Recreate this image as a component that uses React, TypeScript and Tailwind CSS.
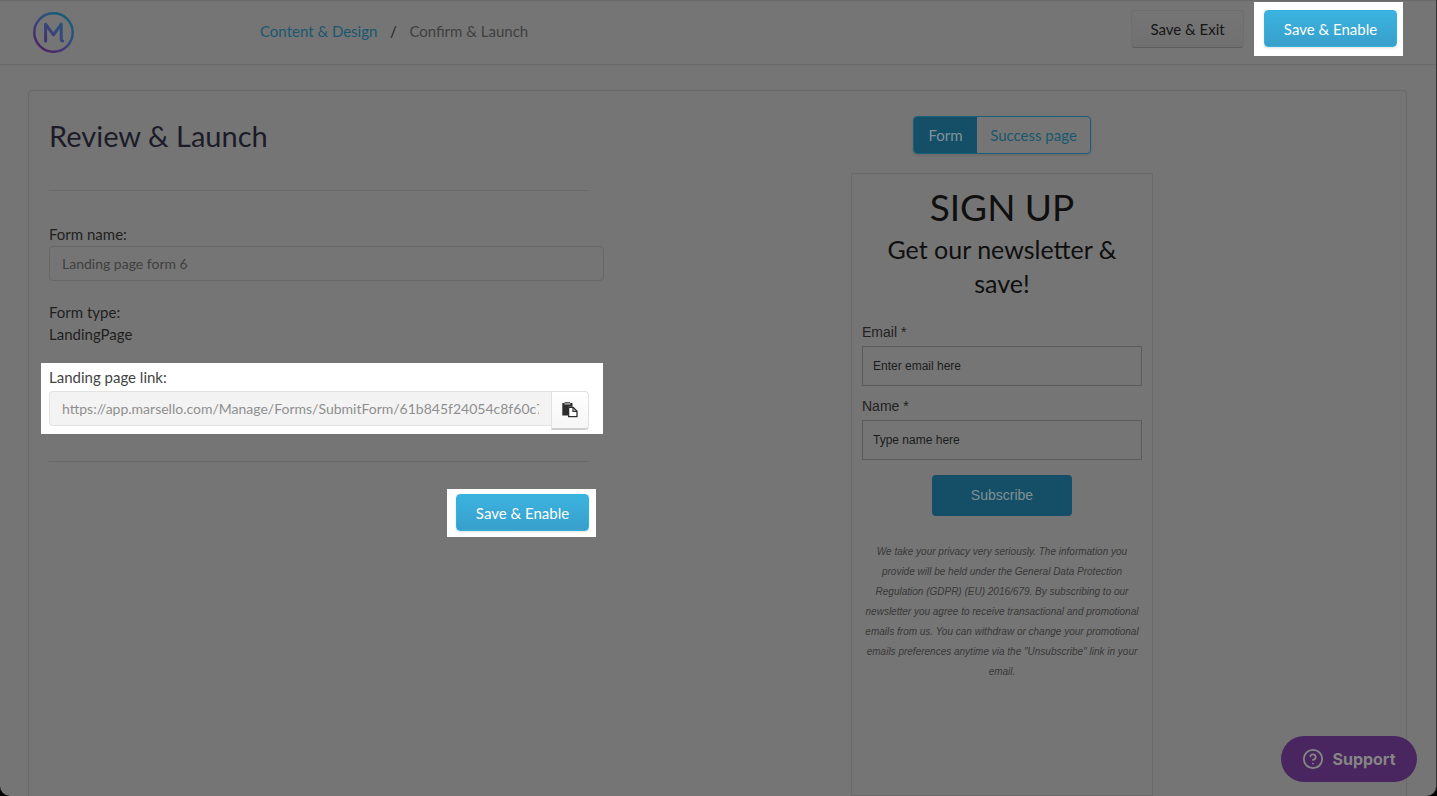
import type { ReactNode } from "react";
import { CircleHelp } from "lucide-react";

type ButtonProps = {
  children: ReactNode;
};

function PrimaryButton({ children }: ButtonProps) {
  return (
    <button
      type="button"
      className="h-[37px] w-[133px] rounded border border-[#35b1de] bg-linear-to-b from-[#3bb3e0] to-[#389fcb] text-[15px] leading-5 text-white shadow-sm"
    >
      {children}
    </button>
  );
}

function Logo() {
  return (
    <svg viewBox="0 0 41 41" className="h-[41px] w-[41px]" fill="none" strokeWidth="2.4" aria-label="Marsello">
      <defs>
        <linearGradient id="logo-gradient" x1="8" y1="36" x2="33" y2="5" gradientUnits="userSpaceOnUse">
          <stop offset="0" stopColor="#4a2467" />
          <stop offset="0.5" stopColor="#39437c" />
          <stop offset="1" stopColor="#155f78" />
        </linearGradient>
      </defs>
      <circle cx="20.5" cy="20.5" r="19.2" stroke="url(#logo-gradient)" />
      <path
        d="M12.6 29V12.2l7.9 10.6 7.7-10.6v14.5q0 2 1.4 2.3"
        stroke="url(#logo-gradient)"
        strokeWidth="3"
        strokeLinecap="round"
        strokeLinejoin="round"
      />
    </svg>
  );
}

function PasteIcon() {
  return (
    <svg viewBox="0 0 16 16" className="h-4 w-4" aria-hidden="true">
      <path d="M0.3 1h2.2V0.3h5.6V1h2.4v3.7H6v8.8H0.3z" fill="#2d2d2d" />
      <path d="M2.4 1.9h6" stroke="#fff" strokeWidth="0.9" />
      <path d="M6.6 5.3h4.4l4 4v5.4H6.6z" fill="#fff" stroke="#2d2d2d" strokeWidth="1.3" strokeLinejoin="round" />
      <path d="M11 5.3v4h4" fill="none" stroke="#2d2d2d" strokeWidth="1.2" />
    </svg>
  );
}

function Header() {
  return (
    <header className="flex h-[65px] shrink-0 items-start border-t border-b border-t-[#696969] border-b-[#6a6a6a]">
      <a href="#home" className="mt-[11px] ml-[33px] w-[227px]">
        <Logo />
      </a>
      <nav className="mt-[19px] flex text-[15px] leading-[22px]">
        <a href="#design" className="text-[#19586f]">
          Content &amp; Design
        </a>
        <span className="mx-3 w-2 text-center text-[#222]">/</span>
        <span className="text-[#3f3f3f]">Confirm &amp; Launch</span>
      </nav>
      <div className="mr-[33px] ml-auto flex items-start gap-2.5">
        <button
          type="button"
          className="mt-[9px] h-[38px] w-[113px] rounded border border-[#6e6e6e] border-b-[#5e5e5e] bg-linear-to-b from-[#757575] to-[#707070] text-[15px] leading-5 text-[#161616]"
        >
          Save &amp; Exit
        </button>
        <div className="mt-px bg-white pt-2 pr-1.5 pb-[9px] pl-2.5">
          <PrimaryButton>Save &amp; Enable</PrimaryButton>
        </div>
      </div>
    </header>
  );
}

function ReviewForm() {
  return (
    <section className="flex w-[575px] shrink-0 flex-col pt-6 pl-5 text-[15px] text-[#1f1f1f]">
      <h1 className="text-[29px] leading-[42px] text-[#1c1c28]">Review &amp; Launch</h1>
      <hr className="mt-[33px] mr-[15px] border-[#6a6a6a]" />
      <label htmlFor="form-name" className="mt-[31px] leading-6">
        Form name:
      </label>
      <input
        id="form-name"
        defaultValue="Landing page form 6"
        className="h-[35px] w-full rounded border border-[#676767] px-3 text-[14px] text-[#404040]"
      />
      <div className="mt-5 leading-[22px]">
        <p>Form type:</p>
        <p>LandingPage</p>
      </div>
      <div className="mt-[18px] mr-px -ml-2 flex flex-col bg-white pt-0.5 pr-3.5 pb-1 pl-2">
        <label htmlFor="page-link" className="leading-6 text-[#444]">
          Landing page link:
        </label>
        <div className="mt-0.5 flex items-start">
          <input
            id="page-link"
            readOnly
            defaultValue="https://app.marsello.com/Manage/Forms/SubmitForm/61b845f24054c8f60c7e1d"
            className="h-[35px] min-w-0 flex-1 rounded-l border border-r-0 border-[#e2e2e2] bg-[#f3f3f3] px-3 text-[14px] text-[#8f8f8f]"
          />
          <button
            type="button"
            aria-label="Copy link"
            className="flex h-[39px] w-[38px] items-center justify-center rounded-r border border-[#e2e2e2] border-b-2 border-b-[#cfcfcf] bg-linear-to-b from-white to-[#f6f6f6]"
          >
            <PasteIcon />
          </button>
        </div>
      </div>
      <hr className="mt-[27px] mr-[15px] border-[#6a6a6a]" />
      <div className="mt-[27px] mr-2 self-end bg-white pt-[5px] pr-[7px] pb-1.5 pl-[9px]">
        <PrimaryButton>Save &amp; Enable</PrimaryButton>
      </div>
    </section>
  );
}

type PreviewFieldProps = {
  id: string;
  label: string;
  placeholder: string;
};

function PreviewField({ id, label, placeholder }: PreviewFieldProps) {
  return (
    <div className="mb-2.5">
      <label htmlFor={id} className="block text-[14px] leading-5 text-[#222]">
        {label} *
      </label>
      <input
        id={id}
        placeholder={placeholder}
        className="mt-1 block h-10 w-full border border-[#5b5b5b] px-2.5 text-[12px] placeholder:text-[#1c1c1c]"
      />
    </div>
  );
}

function FormPreview() {
  return (
    <section className="flex flex-1 flex-col items-center pt-[25px] pr-1.5">
      <div className="flex h-[38px] overflow-hidden rounded border border-[#185f7a] text-[15px] leading-5 shadow-sm">
        <button type="button" className="w-[63px] bg-[#154f67] text-[#7f9299]">
          Form
        </button>
        <button type="button" className="w-[113px] text-[#19586f]">
          Success page
        </button>
      </div>
      <div className="mt-[19px] w-[302px] flex-1 border border-[#6a6a6a] px-2.5 pt-2 font-['Liberation_Sans',Arial,sans-serif]">
        <div className="text-center font-[Lato,sans-serif] text-[#0f0f0f]">
          <h2 className="text-[37px] leading-[50px]">SIGN UP</h2>
          <p className="px-4 text-[25px] leading-[34px]">Get our newsletter &amp; save!</p>
        </div>
        <form className="mt-[22px]">
          <PreviewField id="email" label="Email" placeholder="Enter email here" />
          <PreviewField id="name" label="Name" placeholder="Type name here" />
          <button
            type="button"
            className="mx-auto mt-[15px] block h-[41px] w-[140px] rounded bg-[#154f67] text-[14px] text-[#808f95]"
          >
            Subscribe
          </button>
        </form>
        <p className="mt-[26px] text-center text-[10px] leading-5 text-[#383838] italic">
          We take your privacy very seriously. The information you provide will be held under the General Data
          Protection Regulation (GDPR) (EU) 2016/679. By subscribing to our newsletter you agree to receive
          transactional and promotional emails from us. You can withdraw or change your promotional emails preferences
          anytime via the "Unsubscribe" link in your email.
        </p>
      </div>
    </section>
  );
}

export default function App() {
  return (
    <div className="h-screen bg-black font-[Lato,sans-serif]">
      <div className="flex h-full flex-col overflow-hidden rounded-b-[10px] border-r border-[#343434] bg-[#757575]">
        <Header />
        <main className="mt-[25px] mr-[29px] ml-7 flex flex-1 rounded-t border border-b-0 border-[#6a6a6a]">
          <ReviewForm />
          <FormPreview />
        </main>
      </div>
      <button
        type="button"
        className="fixed right-5 bottom-3.5 flex h-[46px] w-[136px] items-center justify-center gap-2 rounded-full bg-[#49265f] font-[Inter,sans-serif] text-[16px] font-bold text-[#858585]"
      >
        <CircleHelp className="h-[22px] w-[22px]" strokeWidth={2} />
        Support
      </button>
    </div>
  );
}
